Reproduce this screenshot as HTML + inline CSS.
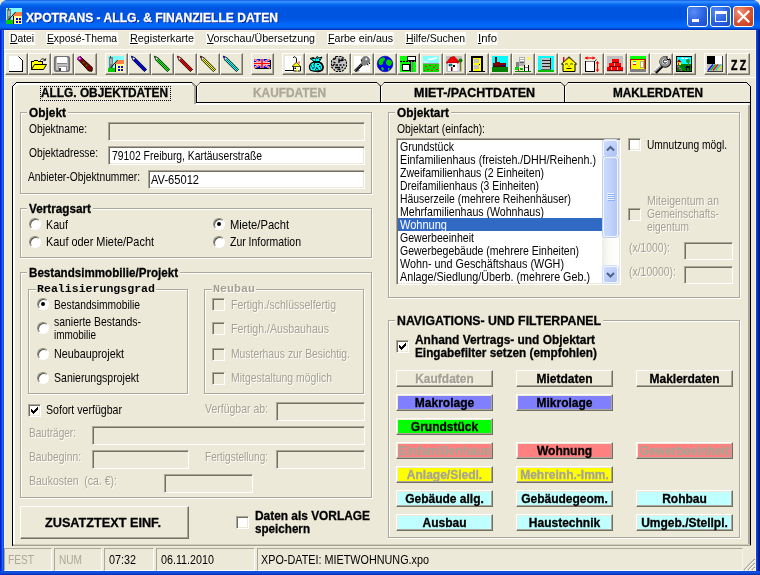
<!DOCTYPE html><html lang="de"><head><meta charset="utf-8"><title>XPOTRANS - ALLG. &amp; FINANZIELLE DATEN</title><style>
html,body{margin:0;padding:0;}
body{width:760px;height:575px;overflow:hidden;background:#ECE9D8;position:relative;font-family:"Liberation Sans",sans-serif;}
#w{position:absolute;left:0;top:0;width:760px;height:575px;overflow:hidden;will-change:transform;}
#w div,#w span,#w svg{position:absolute;box-sizing:border-box;}
.t{white-space:pre;transform-origin:0 0;color:#000;font-size:13px;line-height:15px;height:15px;}
.b{font-weight:bold;-webkit-text-stroke:.3px currentColor;}
.d{color:#A5A192;text-shadow:1px 1px 0 #fff;}
.m{font-size:11px;line-height:13px;height:13px;background:#FDFDFA;}
.mono{font-family:"Liberation Mono",monospace;font-weight:bold;font-size:10.5px;line-height:15px;}
.w{color:#fff;}
.gb{border:1px solid #ACA899;box-shadow:1px 1px 0 #fff, inset 1px 1px 0 #fff;}
.lbl{background:#ECE9D8;}
.in{border:1px solid;border-color:#ACA899 #fff #fff #ACA899;box-shadow:inset 1px 1px 0 #716F64, inset -1px -1px 0 #ECE9D8;background:#fff;}
.in.dis{background:#ECE9D8;}
.btn{border:1px solid;border-color:#fff #716F64 #716F64 #fff;box-shadow:inset -1px -1px 0 #ACA899, inset 1px 1px 0 #ECE9D8;background:#ECE9D8;}
.tb{border:1px solid;border-color:#fff #716F64 #716F64 #fff;box-shadow:inset -1px -1px 0 #ACA899;background:#ECE9D8;width:23px;height:22px;top:53px;}
.rad{width:12px;height:12px;border-radius:50%;background:#fff;border:1px solid;border-color:#8E8C7F #fff #fff #8E8C7F;box-shadow:inset 1px 1px 0 #5A584F;transform:rotate(0deg);}
.dot{width:4px;height:4px;border-radius:50%;background:#000;left:3px;top:3px;}
.sp{border:1px solid;border-color:#ACA899 #fff #fff #ACA899;}
</style></head><body><div id="w">
<div style="left:0;top:0;width:760px;height:575px;background:#0A50D8;border-radius:8px 8px 0 0;"></div>
<div class="" style="left:4px;top:30px;width:752px;height:541px;background:#ECE9D8;"></div>
<div style="left:0;top:0;width:760px;height:30px;border-radius:8px 8px 0 0;background:linear-gradient(to bottom,#0A50DC 0px,#2E86FF 1px,#3590FF 2px,#2480FC 3px,#0E6EF6 4px,#0560EA 6px,#0055E0 8px,#0055E0 18px,#005CEC 21px,#0266FA 24px,#026AFD 26px,#0262F2 27.500px,#0050D8 28.500px,#0032C0 29.500px,#0030BC 30px);"></div>
<div class="" style="left:4px;top:30px;width:752px;height:1px;background:#FAF2D6;"></div>
<div class="" style="left:4px;top:30px;width:1px;height:541px;background:#FAF2D6;"></div>
<div class="" style="left:755px;top:30px;width:1px;height:541px;background:#FAF2D6;"></div>
<div style="left:0;top:30px;width:4px;height:545px;background:linear-gradient(to right,#0019CF 0px,#0019CF 1px,#0A3BE0 1px,#0A3BE0 2px,#1A6AEE 2px,#1A6AEE 3px,#0A50E0 3px);"></div>
<div style="left:756px;top:30px;width:4px;height:545px;background:linear-gradient(to left,#00138C 0px,#00138C 1px,#001EA0 1px,#001EA0 2px,#0538D2 2px,#0538D2 3px,#0A48E6 3px);"></div>
<div style="left:0;top:571px;width:760px;height:4px;background:linear-gradient(to bottom,#0A4AD2 0px,#1058E2 1px,#0F48D6 2px,#0A2AB8 4px);"></div>
<span class="t b w" style="transform:scaleX(0.9305);left:26px;top:10px;text-shadow:1px 1px 0 #0A1F8C;font-size:13px;line-height:15px;height:15px;">XPOTRANS - ALLG. &amp; FINANZIELLE DATEN</span>
<svg style="left:6px;top:8px" width="16" height="16" viewBox="0 0 16 16" shape-rendering="crispEdges"><rect width="16" height="16" fill="#80FFFF"/><rect x="1" y="1" width="4" height="11" fill="#808080"/><rect x="2" y="0" width="1" height="2" fill="#404040"/><rect x="2" y="3" width="2" height="5" fill="#B0B0B0"/><rect x="0" y="12" width="7" height="4" fill="#00D000"/><path d="M6 8l4-4h6v4z" fill="#FF8040" shape-rendering="auto"/><path d="M2.5 12L9.6 4" stroke="#000" stroke-width=".9" shape-rendering="auto"/><rect x="7" y="8" width="9" height="8" fill="#FFFFA0"/><rect x="7" y="8" width="1" height="8" fill="#000"/><rect x="10" y="10" width="2" height="2" fill="#0000FF"/><rect x="13" y="10" width="2" height="2" fill="#0000FF"/><rect x="10" y="13" width="2" height="2" fill="#0000FF"/><rect x="13" y="13" width="2" height="2" fill="#0000FF"/></svg>
<div class="" style="left:687px;top:6px;width:21px;height:21px;border:1px solid #fff;border-radius:3px;background:radial-gradient(circle at 30% 25%,#5A8CF5 0%,#2A62E2 55%,#1C48C4 100%);"></div>
<div class="" style="left:710px;top:6px;width:21px;height:21px;border:1px solid #fff;border-radius:3px;background:radial-gradient(circle at 30% 25%,#5A8CF5 0%,#2A62E2 55%,#1C48C4 100%);"></div>
<div class="" style="left:733px;top:6px;width:21px;height:21px;border:1px solid #fff;border-radius:3px;background:radial-gradient(circle at 30% 25%,#F09478 0%,#DC5336 50%,#B8391C 100%);"></div>
<div class="" style="left:692px;top:19px;width:7px;height:3px;background:#fff;"></div>
<div class="" style="left:715px;top:11px;width:12px;height:11px;border:1px solid #fff;border-top-width:3px;"></div>
<svg style="left:737px;top:10px" width="13" height="13" viewBox="0 0 13 13"><path d="M1.5 1.5l10 10M11.5 1.5l-10 10" stroke="#fff" stroke-width="2.2" stroke-linecap="square"/></svg>
<span class="t m" style="transform:scaleX(0.9385);left:9px;top:32px;padding:0 1px;"><u>D</u>atei</span>
<span class="t m" style="transform:scaleX(0.9398);left:46px;top:32px;padding:0 1px;"><u>E</u>xposé-Thema</span>
<span class="t m" style="transform:scaleX(0.9787);left:129px;top:32px;padding:0 1px;"><u>R</u>egisterkarte</span>
<span class="t m" style="transform:scaleX(0.9709);left:206px;top:32px;padding:0 1px;"><u>V</u>orschau/Übersetzung</span>
<span class="t m" style="transform:scaleX(0.9671);left:327px;top:32px;padding:0 1px;"><u>F</u>arbe ein/aus</span>
<span class="t m" style="transform:scaleX(0.9473);left:405px;top:32px;padding:0 1px;"><u>H</u>ilfe/Suchen</span>
<span class="t m" style="transform:scaleX(1.0315);left:477px;top:32px;padding:0 1px;"><u>I</u>nfo</span>
<div class="" style="left:4px;top:49px;width:752px;height:1px;background:#fff;"></div>
<div class="" style="left:4px;top:77px;width:752px;height:1px;background:#fff;"></div>
<div class="tb" style="left:5px;"><svg width="23" height="22" viewBox="0 0 23 22" style="left:-1px;top:-1px" shape-rendering="crispEdges"><g transform="translate(3,3)"><path d="M1 0h10l4 4v12H1z" fill="#fff"/><path d="M10.5 .5l4 4" stroke="#000" fill="none" shape-rendering="auto"/><path d="M14.5 4V16M1 15.5h14" stroke="#000"/></g></svg></div>
<div class="tb" style="left:28px;"><svg width="23" height="22" viewBox="0 0 23 22" style="left:-1px;top:-1px" shape-rendering="crispEdges"><g transform="translate(3,3)"><g transform="translate(0,1)"><path d="M.5 12.5v-8h2l1-1h3l1 1h4v3" fill="#FFFF00" stroke="#000"/><path d="M.5 12.5l3-5h12l-3 5z" fill="#FFFF00" stroke="#000" shape-rendering="auto"/><path d="M9.5 3.5c1-2.2 3.4-2.2 4.6-.4M14.4 3.4l.4-2M14.4 3.4l-2-.2" stroke="#000" fill="none" shape-rendering="auto" stroke-width=".9"/></g></g></svg></div>
<div class="tb" style="left:51px;"><svg width="23" height="22" viewBox="0 0 23 22" style="left:-1px;top:-1px" shape-rendering="crispEdges"><g transform="translate(3,3)"><rect x=".8" y=".8" width="14.4" height="14.4" rx="1.5" fill="#C0C0C0" stroke="#707070" stroke-width="1.8" shape-rendering="auto"/><rect x="3" y="1" width="10" height="6" fill="#fff"/><rect x="3" y="7" width="10" height="1" fill="#808080"/><rect x="4" y="10" width="8" height="5" fill="#fff" stroke="#808080" stroke-width=".8"/><rect x="5" y="11.5" width="2" height="3" fill="#404040"/></g></svg></div>
<div class="tb" style="left:74px;"><svg width="23" height="22" viewBox="0 0 23 22" style="left:-1px;top:-1px" shape-rendering="crispEdges"><g transform="translate(3,3)"><g shape-rendering="auto"><path d="M.8 3.2L3.4 .6 15.4 11.6 15 15.2 11.6 15z" fill="#800000" stroke="#000" stroke-width=".9"/><circle cx="2.6" cy="2.6" r="2" fill="#FF00FF" stroke="#000" stroke-width=".5"/><circle cx="2.6" cy="2.4" r=".7" fill="#fff"/><circle cx="6.5" cy="6.6" r=".9" fill="#00A000"/><circle cx="9.5" cy="9.4" r=".9" fill="#00A000"/></g></g></svg></div>
<div class="tb" style="left:105px;"><svg width="23" height="22" viewBox="0 0 23 22" style="left:-1px;top:-1px" shape-rendering="crispEdges"><g transform="translate(3,3)"><rect width="16" height="16" fill="#80FFFF"/><rect x="1" y="1" width="4" height="11" fill="#808080"/><rect x="2" y="0" width="1" height="2" fill="#404040"/><rect x="2" y="3" width="2" height="5" fill="#B0B0B0"/><rect x="0" y="12" width="7" height="4" fill="#00D000"/><path d="M6 8l4-4h6v4z" fill="#FF8040" shape-rendering="auto"/><path d="M2.5 12L9.6 4" stroke="#000" stroke-width=".9" shape-rendering="auto"/><rect x="7" y="8" width="9" height="8" fill="#FFFFA0"/><rect x="7" y="8" width="1" height="8" fill="#000"/><rect x="10" y="10" width="2" height="2" fill="#0000FF"/><rect x="13" y="10" width="2" height="2" fill="#0000FF"/><rect x="10" y="13" width="2" height="2" fill="#0000FF"/><rect x="13" y="13" width="2" height="2" fill="#0000FF"/></g></svg></div>
<div class="tb" style="left:128px;"><svg width="23" height="22" viewBox="0 0 23 22" style="left:-1px;top:-1px" shape-rendering="crispEdges"><g transform="translate(3,3)"><g shape-rendering="auto"><path d="M0.4 0.2L4.2 2 15.6 13.4 13.4 15.6 2 4.2z" fill="#0000FF" stroke="#000" stroke-width=".9"/><path d="M0.4 0.2L4.4 2.2 2.2 4.4z" fill="#fff" stroke="#000" stroke-width=".5"/><path d="M0.2 0L2.4 1 1 2.4z" fill="#0000FF"/><path d="M3.6 3.6L14.4 14.4" stroke="#000080" stroke-width="1"/></g></g></svg></div>
<div class="tb" style="left:151px;"><svg width="23" height="22" viewBox="0 0 23 22" style="left:-1px;top:-1px" shape-rendering="crispEdges"><g transform="translate(3,3)"><g shape-rendering="auto"><path d="M0.4 0.2L4.2 2 15.6 13.4 13.4 15.6 2 4.2z" fill="#00FF00" stroke="#000" stroke-width=".9"/><path d="M0.4 0.2L4.4 2.2 2.2 4.4z" fill="#fff" stroke="#000" stroke-width=".5"/><path d="M0.2 0L2.4 1 1 2.4z" fill="#008000"/><path d="M3.6 3.6L14.4 14.4" stroke="#006000" stroke-width="1"/></g></g></svg></div>
<div class="tb" style="left:174px;"><svg width="23" height="22" viewBox="0 0 23 22" style="left:-1px;top:-1px" shape-rendering="crispEdges"><g transform="translate(3,3)"><g shape-rendering="auto"><path d="M0.4 0.2L4.2 2 15.6 13.4 13.4 15.6 2 4.2z" fill="#FF0000" stroke="#000" stroke-width=".9"/><path d="M0.4 0.2L4.4 2.2 2.2 4.4z" fill="#fff" stroke="#000" stroke-width=".5"/><path d="M0.2 0L2.4 1 1 2.4z" fill="#FF0000"/><path d="M3.6 3.6L14.4 14.4" stroke="#600000" stroke-width="1"/></g></g></svg></div>
<div class="tb" style="left:197px;"><svg width="23" height="22" viewBox="0 0 23 22" style="left:-1px;top:-1px" shape-rendering="crispEdges"><g transform="translate(3,3)"><g shape-rendering="auto"><path d="M0.4 0.2L4.2 2 15.6 13.4 13.4 15.6 2 4.2z" fill="#FFFF00" stroke="#000" stroke-width=".9"/><path d="M0.4 0.2L4.4 2.2 2.2 4.4z" fill="#fff" stroke="#000" stroke-width=".5"/><path d="M0.2 0L2.4 1 1 2.4z" fill="#800000"/><path d="M3.6 3.6L14.4 14.4" stroke="#404000" stroke-width="1"/></g></g></svg></div>
<div class="tb" style="left:220px;"><svg width="23" height="22" viewBox="0 0 23 22" style="left:-1px;top:-1px" shape-rendering="crispEdges"><g transform="translate(3,3)"><g shape-rendering="auto"><path d="M0.4 0.2L4.2 2 15.6 13.4 13.4 15.6 2 4.2z" fill="#00FFFF" stroke="#000" stroke-width=".9"/><path d="M0.4 0.2L4.4 2.2 2.2 4.4z" fill="#fff" stroke="#000" stroke-width=".5"/><path d="M0.2 0L2.4 1 1 2.4z" fill="#0000FF"/><path d="M3.6 3.6L14.4 14.4" stroke="#006060" stroke-width="1"/></g></g></svg></div>
<div class="tb" style="left:251px;"><svg width="23" height="22" viewBox="0 0 23 22" style="left:-1px;top:-1px" shape-rendering="crispEdges"><g transform="translate(3,3)"><rect x="1" y="4" width="16" height="9" fill="#000"/><rect x="0" y="3" width="16" height="9" fill="#0000E0"/><g shape-rendering="auto"><path d="M0 3l16 9M16 3L0 12" stroke="#fff" stroke-width="2"/><path d="M0 3l16 9M16 3L0 12" stroke="#FF0000" stroke-width=".8"/><path d="M8 3v9M0 7.5h16" stroke="#fff" stroke-width="3"/><path d="M8 3v9M0 7.5h16" stroke="#FF0000" stroke-width="1.6"/></g></g></svg></div>
<div class="tb" style="left:282px;"><svg width="23" height="22" viewBox="0 0 23 22" style="left:-1px;top:-1px" shape-rendering="crispEdges"><g transform="translate(3,3)"><rect width="16" height="16" fill="#fff"/><g shape-rendering="auto" fill="none" stroke="#000"><path d="M8.300 2C8.800 .300 10 .300 11 1.800L11.500 2.800V7" stroke-width="1"/><path d="M0 14.500h8.500" stroke-width="1"/><path d="M8.500 10.500v4.500h7v-4.500" fill="#fff" stroke-width="1"/><path d="M7 10.500L11.300 6.300l4.500 4.200z" fill="#FFFF00" stroke-width=".700"/><rect x="11.500" y="12.500" width="1.500" height="3" fill="#FFFF00" stroke="none"/><rect x="9.500" y="11.500" width="1.500" height="1.500" fill="#000" stroke="none"/><rect x="13.500" y="5.500" width="1.200" height="2" fill="#FF0000" stroke="none"/></g></g></svg></div>
<div class="tb" style="left:305px;"><svg width="23" height="22" viewBox="0 0 23 22" style="left:-1px;top:-1px" shape-rendering="crispEdges"><g transform="translate(3,3)"><g shape-rendering="auto"><path d="M5.500 6C2 7.500 .800 10.500 2 13.500 3.500 15.800 13 15.800 14.500 13.500 15.800 10.500 14.500 7.500 11 6z" fill="#00FFFF" stroke="#000" stroke-width="1.300"/><path d="M12 6.500c3 1.500 3.500 5 2.300 7.200-.800 1.300-3 1.800-5 2" stroke="#000" stroke-width="1.600" fill="none"/><path d="M2 2.500l3.500-1 2 1.500L9 .500l2 1.500 3-1-2 3.500-1 1.500H6L4.500 4z" fill="#00FFFF" stroke="#000" stroke-width="1"/><path d="M5.500 5.800h6" stroke="#000" stroke-width="1.400"/><path d="M5 9h2M9 8.500h2M4 12h2M8 11.500l2 1.500M11 10.500h1.500M7 13.500h1M3 10h1M6 7.500h1M6 11h1M10 14h1M4 2.500h2M9 2.500h1M11 3.500h1M7 4h1M12 12h1" stroke="#000" stroke-width="1.200"/></g></g></svg></div>
<div class="tb" style="left:328px;"><svg width="23" height="22" viewBox="0 0 23 22" style="left:-1px;top:-1px" shape-rendering="crispEdges"><g transform="translate(3,3)"><g shape-rendering="auto"><path d="M5 .500h6l4.500 4.500v6L11 15.500H5L.500 11V5z" fill="#C4C4C4" stroke="#000" stroke-width="1.100" stroke-dasharray="2.200 1"/><path d="M3 3.500l2-1.500M8 2.500V7M8 4.500h3.500M10.500 2.500l2 2M2.500 6l2 1M4.500 9h2.500M8.500 9h2M12 9h1.500M4 11.500h5M10.500 11.500h1.500M6.500 13.500h3M1.500 10l2-2" stroke="#000" stroke-width="1.300" fill="none"/></g></g></svg></div>
<div class="tb" style="left:351px;"><svg width="23" height="22" viewBox="0 0 23 22" style="left:-1px;top:-1px" shape-rendering="crispEdges"><g transform="translate(3,3)"><rect width="16" height="16" fill="#fff"/><g shape-rendering="auto"><path d="M1 15.200L8 8.200" stroke="#000" stroke-width="2.800"/><path d="M1 14.600L8 7.600" stroke="#909090" stroke-width="1.200" stroke-dasharray="1 .800"/><path d="M3.800 15.500l1.200-1.200" stroke="#000" stroke-width="1"/><path d="M7.500 5c0-3 2-5 5-4.500 2.500 .500 3.500 3 3 5-.500 1.500-1.500 2-2.500 2-.500 1.500-2 2-3.500 1.500C8 8.500 7.500 7 7.500 5z" fill="#808080" stroke="#505050" stroke-width=".600"/><circle cx="12.300" cy="3.300" r="1" fill="#fff"/><path d="M7.300 3.500l.200 1.500M15.300 6.500l.300 1.500M13 8.500l1.500 .500" stroke="#000" stroke-width="1"/></g></g></svg></div>
<div class="tb" style="left:374px;"><svg width="23" height="22" viewBox="0 0 23 22" style="left:-1px;top:-1px" shape-rendering="crispEdges"><g transform="translate(3,3)"><g shape-rendering="auto"><circle cx="8" cy="8" r="7.8" fill="#0000F0" stroke="#000080" stroke-width=".6"/><path d="M3 3c2-2 5-2 5 0 0 2-2 2-2 4 0 2-3 3-4 1-1-2 0-4 1-5zM10 4c2-1 4 0 5 2 0 2-1 4-3 4-1-1-3-1-3-3 0-1 0-2 1-3zM5 11c1 0 2 1 2 2s-1 2-2 1-1-3 0-3zM11 12c1 0 2 0 2 1l-2 2z" fill="#00D000"/></g></g></svg></div>
<div class="tb" style="left:397px;"><svg width="23" height="22" viewBox="0 0 23 22" style="left:-1px;top:-1px" shape-rendering="crispEdges"><g transform="translate(3,3)"><rect width="16" height="16" fill="#00FF00"/><rect x="7.5" y=".5" width="8" height="4" fill="#fff" stroke="#000"/><rect x="0" y="5" width="16" height="1" fill="#808080"/><path d="M0 5.5h16" stroke="#000" stroke-dasharray="2 1"/><rect x="2.5" y="8.5" width="7" height="6" fill="#fff" stroke="#000"/><rect x="10" y="6" width="1" height="10" fill="#000"/><rect x="12" y="6" width="1" height="10" fill="#808080"/></g></svg></div>
<div class="tb" style="left:420px;"><svg width="23" height="22" viewBox="0 0 23 22" style="left:-1px;top:-1px" shape-rendering="crispEdges"><g transform="translate(3,3)"><rect width="16" height="8" fill="#80FFFF"/><rect y="8" width="16" height="8" fill="#00E000"/><rect y="7" width="16" height="1" fill="#A0A0A0"/><g shape-rendering="auto"><path d="M5 3.5c2-1 3 .5 5-.5s3-1.500 4-1" stroke="#fff" stroke-width="1.6" fill="none"/><path d="M1 6h4" stroke="#fff" stroke-width="1"/></g><g fill="#FF0000"><rect x="2" y="10" width="2" height="1"/><rect x="6" y="9" width="2" height="1"/><rect x="10" y="11" width="2" height="1"/><rect x="4" y="13" width="2" height="1"/><rect x="13" y="13" width="2" height="1"/><rect x="8" y="14" width="2" height="1"/><rect x="12" y="9" width="1" height="1"/><rect x="1" y="14" width="1" height="1"/></g></g></svg></div>
<div class="tb" style="left:443px;"><svg width="23" height="22" viewBox="0 0 23 22" style="left:-1px;top:-1px" shape-rendering="crispEdges"><g transform="translate(3,3)"><rect width="16" height="16" fill="#C0C0C0"/><g shape-rendering="auto"><path d="M0 7L5 1l7 6z" fill="#FF0000" stroke="#800000" stroke-width=".7"/><path d="M5 1l3-1 6 6-2 1z" fill="#E00000"/><rect x="2" y="7" width="9" height="8" fill="#fff"/><rect x="3" y="8" width="3" height="2" fill="#00C0C0" stroke="#000" stroke-width=".5"/><rect x="7" y="9" width="2" height="2" fill="#000"/><rect x="5" y="11" width="1.500" height="4" fill="#800000"/><rect x="11" y="8" width="2" height="7" fill="#E0E0E0"/><rect x="14" y="5" width="1" height="10" fill="#808000"/><circle cx="14.500" cy="4.500" r="2" fill="#008000"/></g></g></svg></div>
<div class="tb" style="left:466px;"><svg width="23" height="22" viewBox="0 0 23 22" style="left:-1px;top:-1px" shape-rendering="crispEdges"><g transform="translate(3,3)"><rect x="2" y="0" width="12" height="16" fill="#000"/><rect x="4" y="2" width="8" height="13" fill="#FFFF00"/><rect x="5" y="3" width="5" height="4" fill="#C0C0C0"/><rect x="5" y="9" width="5" height="4" fill="#C0C0C0"/><rect x="0" y="15" width="16" height="1" fill="#000"/><rect x="10" y="8" width="1" height="1" fill="#000"/></g></svg></div>
<div class="tb" style="left:489px;"><svg width="23" height="22" viewBox="0 0 23 22" style="left:-1px;top:-1px" shape-rendering="crispEdges"><g transform="translate(3,3)"><rect width="16" height="11" fill="#00FFFF"/><rect y="11" width="16" height="5" fill="#008000"/><rect x="1" y="7" width="13" height="4" fill="#800000"/><rect x="3" y="1" width="1.500" height="7" fill="#800000"/><rect x="9" y="9" width="4" height="2" fill="#0000C0"/><rect x="1" y="10" width="13" height="1" fill="#400000"/><rect x="5" y="6" width="3" height="1" fill="#800000"/></g></svg></div>
<div class="tb" style="left:512px;"><svg width="23" height="22" viewBox="0 0 23 22" style="left:-1px;top:-1px" shape-rendering="crispEdges"><g transform="translate(3,3)"><g><rect x="4" y="1" width="6" height="9" fill="#B0B0B0"/><rect x="5" y="2" width="4" height="1" fill="#fff"/><rect x="5" y="4" width="4" height="1" fill="#fff"/><rect x="5" y="6" width="4" height="1" fill="#606060"/><rect x="1" y="6" width="3" height="7" fill="#808080"/><rect x="9" y="9" width="5" height="6" fill="#fff"/><rect x="9" y="9" width="1" height="6" fill="#000"/><rect x="13" y="9" width="1" height="6" fill="#000"/><rect x="10" y="11" width="3" height="1" fill="#808080"/><rect x="0" y="11" width="4" height="3" fill="#00E000"/><rect x="5" y="12" width="3" height="2" fill="#00C000"/><rect x="0" y="15" width="16" height="1" fill="#008000"/><rect x="3" y="13" width="1" height="2" fill="#FF0000"/><rect x="12" y="2" width="3" height="1" fill="#FFFF00"/><rect x="13" y="1" width="1" height="3" fill="#FFFF00"/></g></g></svg></div>
<div class="tb" style="left:535px;"><svg width="23" height="22" viewBox="0 0 23 22" style="left:-1px;top:-1px" shape-rendering="crispEdges"><g transform="translate(3,3)"><rect width="16" height="16" fill="#00FFFF"/><rect y="14" width="16" height="2" fill="#00C000"/><rect x="3" y="2" width="10" height="12" fill="#C0C0C0"/><rect x="12" y="2" width="1" height="12" fill="#000"/><rect x="4" y="4" width="8" height="1.200" fill="#202020"/><rect x="4" y="7" width="8" height="1.200" fill="#202020"/><rect x="4" y="10" width="8" height="1.200" fill="#202020"/><rect x="3" y="13" width="10" height="1" fill="#606060"/></g></svg></div>
<div class="tb" style="left:558px;"><svg width="23" height="22" viewBox="0 0 23 22" style="left:-1px;top:-1px" shape-rendering="crispEdges"><g transform="translate(3,3)"><g shape-rendering="auto"><rect x="2" y="1" width="1.500" height="5" fill="#FF0000"/><path d="M.5 8L8 .8 15.500 8h-1.500v7.500H2V8z" fill="#FFFF00" stroke="#000" stroke-width="1"/><path d="M4 8.500c1-1 2-1 3 0M9 8.500c1-1 2-1 3 0" stroke="#000" stroke-width=".8" fill="none"/><path d="M5.500 12.500h5" stroke="#000" stroke-width=".9"/><path d="M8 9.500v1.500" stroke="#806000" stroke-width=".8"/><path d="M4 5l4-3 4 3" stroke="#806000" stroke-width=".7" fill="none"/></g></g></svg></div>
<div class="tb" style="left:581px;"><svg width="23" height="22" viewBox="0 0 23 22" style="left:-1px;top:-1px" shape-rendering="crispEdges"><g transform="translate(3,3)"><rect x="1.500" y="5.500" width="9" height="10" fill="#fff" stroke="#000"/><rect x="2" y="5" width="8" height="1" fill="#808080"/><g shape-rendering="auto"><path d="M1 2h10" stroke="#FF0000" stroke-width="1.200"/><path d="M1 2l2.500-1.800v3.600zM11 2L8.500 .2v3.600z" fill="#FF0000"/><path d="M13.500 5.500v10" stroke="#FF0000" stroke-width="1.200"/><path d="M13.500 5l-1.800 2.500h3.600zM13.500 16l-1.800-2.500h3.600z" fill="#FF0000"/><path d="M10.500 5.500l2-2" stroke="#000" stroke-width=".8"/></g></g></svg></div>
<div class="tb" style="left:604px;"><svg width="23" height="22" viewBox="0 0 23 22" style="left:-1px;top:-1px" shape-rendering="crispEdges"><g transform="translate(3,3)"><rect width="16" height="16" fill="#C0C0C0"/><g fill="#FF0000"><rect x="5" y="3" width="7" height="3"/><rect x="2" y="7" width="5" height="3"/><rect x="8" y="7" width="6" height="3"/><rect x="0" y="11" width="4" height="3"/><rect x="5" y="11" width="5" height="3"/><rect x="11" y="11" width="5" height="3"/></g><g fill="#800000"><rect x="5" y="6" width="7" height="1"/><rect x="2" y="10" width="12" height="1"/><rect x="0" y="14" width="16" height="1"/></g></g></svg></div>
<div class="tb" style="left:627px;"><svg width="23" height="22" viewBox="0 0 23 22" style="left:-1px;top:-1px" shape-rendering="crispEdges"><g transform="translate(3,3)"><rect width="16" height="3" fill="#00FF00"/><rect y="3" width="16" height="10" fill="#FFFF00"/><rect y="13" width="16" height="3" fill="#808080"/><path d="M.500 13V3.500h15V13" fill="none" stroke="#C00000"/><rect x="3" y="5" width="3" height="3" fill="#fff"/><rect x="3" y="5" width="3" height="1" fill="#00C0C0"/><rect x="3" y="8" width="3" height="1" fill="#FF0000"/><rect x="10" y="5" width="3" height="6" fill="#fff"/><rect x="10" y="5" width="3" height="6" fill="none" stroke="#808080" stroke-width=".6"/><rect x="14" y="4" width="1" height="9" fill="#808000"/></g></svg></div>
<div class="tb" style="left:650px;"><svg width="23" height="22" viewBox="0 0 23 22" style="left:-1px;top:-1px" shape-rendering="crispEdges"><g transform="translate(3,3)"><g shape-rendering="auto"><path d="M2.500 16.500L9.500 9.500" stroke="#000" stroke-width="3.400"/><path d="M1.500 15.200L8.500 8.200" stroke="#B0B0B0" stroke-width="3"/><path d="M1 14.300L7.800 7.500" stroke="#fff" stroke-width="1.200"/><path d="M2.500 16L4 14.500M4.200 14.300l1.500-1.500M6 12.500L7.500 11" stroke="#404040" stroke-width=".600"/><circle cx="12.300" cy="5.800" r="4" fill="none" stroke="#000" stroke-width="3.800"/><circle cx="12" cy="5.500" r="4" fill="#fff" stroke="#909090" stroke-width="2.600"/><path d="M12 5.500L17 0" stroke="#ECE9D8" stroke-width="2.600"/><path d="M13.800 .800l.400 2.600 2.600 .400" stroke="#000" stroke-width="1.100" fill="none"/><circle cx="12" cy="5.500" r="1.700" fill="#fff" stroke="#000" stroke-width="1"/><path d="M12.400 5.500h1.600" stroke="#fff" stroke-width="1.600"/></g></g></svg></div>
<div class="tb" style="left:673px;"><svg width="23" height="22" viewBox="0 0 23 22" style="left:-1px;top:-1px" shape-rendering="crispEdges"><g transform="translate(3,3)"><rect width="16" height="16" fill="#000"/><rect x="1" y="1" width="14" height="7" fill="#00FFFF"/><rect x="1" y="8" width="14" height="7" fill="#008000"/><rect x="5" y="2" width="3" height="1" fill="#fff"/><rect x="6" y="1" width="1" height="1" fill="#fff"/><rect x="9" y="2" width="3" height="1" fill="#fff"/><rect x="1" y="6" width="4" height="3" fill="#FFFF00"/><path d="M.800 6.200L3 3.200l2.800 3z" fill="#900000" shape-rendering="auto"/><rect x="2" y="7" width="1" height="2" fill="#C00000"/><circle cx="12" cy="5" r="2" fill="#209020" shape-rendering="auto"/><rect x="11.500" y="6.500" width="1" height="2.500" fill="#906020"/><rect x="10" y="10.500" width="1" height="3" fill="#000"/><rect x="13" y="10.500" width="1" height="3" fill="#000"/><rect x="10" y="10" width="4" height="2" fill="#000"/><rect x="9" y="10.500" width="1" height="1" fill="#0000FF"/><path d="M1.500 10l4 4.500" stroke="#FF40FF" stroke-width="1.300" stroke-dasharray="1.500 1" shape-rendering="auto"/><path d="M2.500 10l3.500 4" stroke="#fff" stroke-width=".600" stroke-dasharray="1 1.500" shape-rendering="auto"/></g></svg></div>
<div class="tb" style="left:704px;"><svg width="23" height="22" viewBox="0 0 23 22" style="left:-1px;top:-1px" shape-rendering="crispEdges"><g transform="translate(3,3)"><rect x="0" y="0" width="8" height="8" fill="#000"/><rect x="8" y="0" width="7" height="8" fill="#fff"/><rect x="0" y="8" width="15" height="7" fill="#C0C0C0"/><g shape-rendering="auto" stroke-width="1.300"><path d="M1 14.500l5-6" stroke="#0000FF"/><path d="M3.500 14.500l5-6" stroke="#00C000"/><path d="M6 14.500l5-6" stroke="#FF0000"/><path d="M8.500 14.500l5-6" stroke="#00E0E0"/><path d="M11 14.500l4-4.800" stroke="#E0E000"/></g><rect x="15" y="0" width="1" height="16" fill="#404040"/><rect x="0" y="15" width="16" height="1" fill="#404040"/></g></svg></div>
<div class="tb" style="left:727px;"><span class="t b" style="left:3px;top:3px;font-size:15px;line-height:15px;height:15px;letter-spacing:3.5px;transform:scaleX(.7);-webkit-text-stroke:.5px #000;">ZZ</span></div>
<svg style="left:0;top:0" width="760" height="575" viewBox="0 0 760 575" shape-rendering="crispEdges" fill="none">
<path d="M14 546V87l3-3H192" stroke="#fff" stroke-width="2"/>
<path d="M12.500 546V86.500l4-4H192" stroke="#000"/>
<path d="M13 86l3.500-3.500" stroke="#000" shape-rendering="auto"/>
<path d="M12 82h4l-4 4z" fill="#DCDCDC" shape-rendering="auto"/>
<path d="M192 82.500l3.500 3.500M200 82.500l-3.500 3.500" stroke="#000" shape-rendering="auto"/>
<path d="M195 86v18" stroke="#ACA899" stroke-width="2"/>
<path d="M192.500 84l2 2" stroke="#ACA899" stroke-width="1.500" shape-rendering="auto"/>
<path d="M196 104H749" stroke="#fff" stroke-width="2"/>
<path d="M197.500 86v16M200 83.500H377M381.500 86v16M384 83.500H561M565.500 86v16M568 83.500H746" stroke="#fff"/>
<path d="M196.500 86v16M200 82.500H377M196 102.500H751" stroke="#000"/>
<path d="M377 82.500l3.500 3.500M384 82.500l-3.500 3.500" stroke="#000" shape-rendering="auto"/>
<path d="M380.500 86v16M384 82.500H561" stroke="#000"/>
<path d="M561 82.500l3.500 3.500M568 82.500l-3.500 3.500" stroke="#000" shape-rendering="auto"/>
<path d="M564.500 86v16M568 82.500H746.500l4 4V546" stroke="#000"/>
<path d="M747 83l3.500 3.500" stroke="#000" shape-rendering="auto"/>
<path d="M751 82h-4l4 4z" fill="#DCDCDC" shape-rendering="auto"/>
<path d="M749 105V545" stroke="#ACA899" stroke-width="2"/>
<path d="M13 544.500H750" stroke="#CFCCBC"/>
<path d="M13 545.500H751" stroke="#A5A292"/>
<path d="M193.500 83h6l-3 3zM378.500 83h5l-2.500 2.500zM562.500 83h5l-2.500 2.500z" fill="#E4E4E4" shape-rendering="auto"/>
</svg>
<span class="t b" style="transform:scaleX(0.9887);left:41px;top:86px;font-size:12px;">ALLG. OBJEKTDATEN</span>
<div class="" style="left:40px;top:86px;width:131px;height:15px;border:1px dotted #000;"></div>
<span class="t b" style="transform:scaleX(0.9894);left:253px;top:86px;font-size:12px;color:#ACA899;">KAUFDATEN</span>
<span class="t b" style="transform:scaleX(1.0411);left:414px;top:86px;font-size:12px;">MIET-/PACHTDATEN</span>
<span class="t b" style="transform:scaleX(0.9806);left:613px;top:86px;font-size:12px;">MAKLERDATEN</span>
<div class="gb" style="left:20px;top:112px;width:352px;height:82px;"></div>
<div class="lbl" style="left:27px;top:107px;width:41px;height:13px"></div>
<span class="t b" style="transform:scaleX(0.9143);left:29px;top:105px;">Objekt</span>
<span class="t " style="transform:scaleX(0.7869);left:29px;top:121px;">Objektname:</span>
<div class="in dis" style="left:108px;top:122px;width:257px;height:19px;"></div>
<span class="t " style="transform:scaleX(0.7891);left:29px;top:145px;">Objektadresse:</span>
<div class="in" style="left:108px;top:146px;width:257px;height:19px;"></div>
<span class="t " style="transform:scaleX(0.7953);left:112px;top:148px;">79102 Freiburg, Kartäuserstraße</span>
<span class="t " style="transform:scaleX(0.7908);left:28px;top:169px;">Anbieter-Objektnummer:</span>
<div class="in" style="left:148px;top:170px;width:217px;height:19px;"></div>
<span class="t " style="transform:scaleX(0.8550);left:151px;top:172px;">AV-65012</span>
<div class="gb" style="left:20px;top:208px;width:352px;height:50px;"></div>
<div class="lbl" style="left:27px;top:203px;width:66px;height:13px"></div>
<span class="t b" style="transform:scaleX(0.9030);left:29px;top:201px;">Vertragsart</span>
<div class="rad" style="left:29px;top:218px;width:12px;height:12px;"></div>
<span class="t " style="transform:scaleX(0.8224);left:46px;top:217px;">Kauf</span>
<div class="rad" style="left:29px;top:236px;width:12px;height:12px;"></div>
<span class="t " style="transform:scaleX(0.8395);left:46px;top:234px;">Kauf oder Miete/Pacht</span>
<div class="rad" style="left:213px;top:218px;width:12px;height:12px;"><div class="dot"></div></div>
<span class="t " style="transform:scaleX(0.8594);left:230px;top:217px;">Miete/Pacht</span>
<div class="rad" style="left:213px;top:236px;width:12px;height:12px;"></div>
<span class="t " style="transform:scaleX(0.8054);left:230px;top:234px;">Zur Information</span>
<div class="gb" style="left:20px;top:272px;width:352px;height:226px;"></div>
<div class="lbl" style="left:27px;top:267px;width:153px;height:13px"></div>
<span class="t b" style="transform:scaleX(0.8928);left:29px;top:265px;">Bestandsimmobilie/Projekt</span>
<div class="gb" style="left:28px;top:289px;width:160px;height:105px;"></div>
<div class="lbl" style="left:36px;top:284px;width:120px;height:13px"></div>
<span class="t mono" style="transform:scaleX(1.1015);left:37px;top:282px;">Realisierungsgrad</span>
<div class="rad" style="left:37px;top:298px;width:12px;height:12px;"><div class="dot"></div></div>
<span class="t " style="transform:scaleX(0.7882);left:54px;top:297px;">Bestandsimmobilie</span>
<div class="rad" style="left:37px;top:322px;width:12px;height:12px;"></div>
<span class="t " style="transform:scaleX(0.8025);left:54px;top:314px;">sanierte Bestands-</span>
<span class="t " style="transform:scaleX(0.7649);left:54px;top:327px;">immobilie</span>
<div class="rad" style="left:37px;top:348px;width:12px;height:12px;"></div>
<span class="t " style="transform:scaleX(0.8278);left:54px;top:346px;">Neubauprojekt</span>
<div class="rad" style="left:37px;top:372px;width:12px;height:12px;"></div>
<span class="t " style="transform:scaleX(0.8111);left:54px;top:370px;">Sanierungsprojekt</span>
<div class="gb" style="left:204px;top:289px;width:160px;height:105px;"></div>
<div class="lbl" style="left:212px;top:284px;width:44px;height:13px"></div>
<span class="t mono d" style="transform:scaleX(1.1107);left:213px;top:282px;">Neubau</span>
<div class="in dis" style="left:212px;top:298px;width:13px;height:13px;"></div>
<span class="t d" style="transform:scaleX(0.8073);left:231px;top:297px;">Fertigh./schlüsselfertig</span>
<div class="in dis" style="left:212px;top:322px;width:13px;height:13px;"></div>
<span class="t d" style="transform:scaleX(0.8169);left:231px;top:321px;">Fertigh./Ausbauhaus</span>
<div class="in dis" style="left:212px;top:348px;width:13px;height:13px;"></div>
<span class="t d" style="transform:scaleX(0.7956);left:231px;top:346px;">Musterhaus zur Besichtig.</span>
<div class="in dis" style="left:212px;top:372px;width:13px;height:13px;"></div>
<span class="t d" style="transform:scaleX(0.8033);left:231px;top:370px;">Mitgestaltung möglich</span>
<div class="in" style="left:28px;top:404px;width:13px;height:13px;"><svg width="7" height="7" style="left:2px;top:2px" viewBox="0 0 7 7" shape-rendering="crispEdges"><path d="M0 2h1v1h1v1h1v-1h1v-1h1v-1h1v-1h1v3h-1v1h-1v1h-1v1h-1v1h-1v-1h-1v-1h-1z" fill="#000"/></svg></div>
<span class="t " style="transform:scaleX(0.8153);left:46px;top:402px;">Sofort verfügbar</span>
<span class="t d" style="transform:scaleX(0.8070);left:205px;top:401px;">Verfügbar ab:</span>
<div class="in dis" style="left:276px;top:402px;width:89px;height:19px;"></div>
<span class="t d" style="transform:scaleX(0.7743);left:29px;top:425px;">Bauträger:</span>
<div class="in dis" style="left:92px;top:426px;width:273px;height:19px;"></div>
<span class="t d" style="transform:scaleX(0.7905);left:29px;top:449px;">Baubeginn:</span>
<div class="in dis" style="left:92px;top:450px;width:97px;height:19px;"></div>
<span class="t d" style="transform:scaleX(0.7715);left:205px;top:449px;">Fertigstellung:</span>
<div class="in dis" style="left:276px;top:450px;width:89px;height:19px;"></div>
<span class="t d" style="transform:scaleX(0.8064);left:29px;top:473px;">Baukosten  (ca. €):</span>
<div class="in dis" style="left:164px;top:474px;width:89px;height:19px;"></div>
<div class="btn" style="left:20px;top:506px;width:169px;height:33px;"></div>
<span class="t b" style="transform:scaleX(0.9753);left:45px;top:515px;">ZUSATZTEXT EINF.</span>
<div class="in" style="left:236px;top:516px;width:13px;height:13px;"></div>
<span class="t b" style="transform:scaleX(0.9149);left:255px;top:508px;">Daten als VORLAGE</span>
<span class="t b" style="transform:scaleX(0.8954);left:255px;top:521px;">speichern</span>
<div class="gb" style="left:388px;top:112px;width:352px;height:186px;"></div>
<div class="lbl" style="left:395px;top:107px;width:56px;height:13px"></div>
<span class="t b" style="transform:scaleX(0.9110);left:397px;top:105px;">Objektart</span>
<span class="t " style="transform:scaleX(0.7960);left:397px;top:121px;">Objektart (einfach):</span>
<div class="in" style="left:396px;top:138px;width:225px;height:147px;"></div>
<span class="t " style="transform:scaleX(0.8122);left:400px;top:139px;">Grundstück</span>
<span class="t " style="transform:scaleX(0.8245);left:400px;top:152px;">Einfamilienhaus (freisteh./DHH/Reihenh.)</span>
<span class="t " style="transform:scaleX(0.8101);left:400px;top:165px;">Zweifamilienhaus (2 Einheiten)</span>
<span class="t " style="transform:scaleX(0.7981);left:400px;top:178px;">Dreifamilienhaus (3 Einheiten)</span>
<span class="t " style="transform:scaleX(0.7995);left:400px;top:191px;">Häuserzeile (mehrere Reihenhäuser)</span>
<span class="t " style="transform:scaleX(0.8145);left:400px;top:204px;">Mehrfamilienhaus (Wohnhaus)</span>
<div class="" style="left:398px;top:218px;width:204px;height:13px;background:#316AC5;"></div>
<span class="t w" style="transform:scaleX(0.8480);left:400px;top:217px;">Wohnung</span>
<span class="t " style="transform:scaleX(0.8126);left:400px;top:230px;">Gewerbeeinheit</span>
<span class="t " style="transform:scaleX(0.8068);left:400px;top:243px;">Gewerbegebäude (mehrere Einheiten)</span>
<span class="t " style="transform:scaleX(0.8294);left:400px;top:256px;">Wohn- und Geschäftshaus (WGH)</span>
<span class="t " style="transform:scaleX(0.8268);left:400px;top:269px;">Anlage/Siedlung/Überb. (mehrere Geb.)</span>
<div style="left:602px;top:140px;width:17px;height:143px;background:linear-gradient(to right,#EEEDE5,#FBFBF8 40%,#FEFEFB);"></div><div style="left:603px;top:140px;width:15px;height:17px;border-radius:3px;border:1px solid #F2F6FE;background:linear-gradient(135deg,#CFDDFD,#BBCEF8 60%,#AEC2F0);box-shadow:0 0 0 1px #D2DEF8;"></div><svg style="left:603px;top:141px" width="15" height="15" viewBox="0 0 15 15"><path d="M4 9.500L7.500 6 11 9.500" fill="none" stroke="#4D6185" stroke-width="2"/></svg><div style="left:603px;top:157px;width:15px;height:80px;border-radius:3px;border:1px solid #F2F6FE;background:linear-gradient(to right,#CADAFD,#C1D3FB 50%,#B3C7F4);box-shadow:0 0 0 1px #BDCEF4;"></div><svg style="left:607px;top:193px" width="8" height="9" viewBox="0 0 8 9" shape-rendering="crispEdges"><path d="M0 .500h7M0 2.500h7M0 4.500h7M0 6.500h7" stroke="#EEF4FE"/><path d="M1 1.500h7M1 3.500h7M1 5.500h7M1 7.500h7" stroke="#8CB0F8"/></svg><div style="left:603px;top:266px;width:15px;height:17px;border-radius:3px;border:1px solid #F2F6FE;background:linear-gradient(135deg,#CFDDFD,#BBCEF8 60%,#AEC2F0);box-shadow:0 0 0 1px #D2DEF8;"></div><svg style="left:603px;top:267px" width="15" height="15" viewBox="0 0 15 15"><path d="M4 6L7.500 9.500 11 6" fill="none" stroke="#4D6185" stroke-width="2"/></svg>
<div class="in" style="left:628px;top:138px;width:13px;height:13px;"></div>
<span class="t " style="transform:scaleX(0.7852);left:647px;top:137px;">Umnutzung mögl.</span>
<div class="in dis" style="left:628px;top:208px;width:13px;height:13px;"></div>
<span class="t d" style="transform:scaleX(0.8100);left:647px;top:193px;">Miteigentum an</span>
<span class="t d" style="transform:scaleX(0.7908);left:647px;top:206px;">Gemeinschafts-</span>
<span class="t d" style="transform:scaleX(0.7853);left:647px;top:219px;">eigentum</span>
<span class="t d" style="transform:scaleX(0.7990);left:629px;top:240px;">(x/1000):</span>
<div class="in dis" style="left:684px;top:242px;width:49px;height:18px;"></div>
<span class="t d" style="transform:scaleX(0.8028);left:629px;top:264px;">(x/10000):</span>
<div class="in dis" style="left:684px;top:266px;width:49px;height:18px;"></div>
<div class="gb" style="left:388px;top:320px;width:352px;height:218px;"></div>
<div class="lbl" style="left:395px;top:315px;width:208px;height:13px"></div>
<span class="t b" style="transform:scaleX(0.9457);left:397px;top:313px;">NAVIGATIONS- UND FILTERPANEL</span>
<div class="in" style="left:396px;top:340px;width:13px;height:13px;"><svg width="7" height="7" style="left:2px;top:2px" viewBox="0 0 7 7" shape-rendering="crispEdges"><path d="M0 2h1v1h1v1h1v-1h1v-1h1v-1h1v-1h1v3h-1v1h-1v1h-1v1h-1v1h-1v-1h-1v-1h-1z" fill="#000"/></svg></div>
<span class="t b" style="transform:scaleX(0.9161);left:415px;top:332px;">Anhand Vertrags- und Objektart</span>
<span class="t b" style="transform:scaleX(0.9063);left:415px;top:345px;">Eingabefilter setzen (empfohlen)</span>
<div class="btn" style="left:396px;top:370px;width:97px;height:17px;"></div>
<span class="t b d" style="left:396px;top:372px;width:97px;text-align:center;font-size:12px;">Kaufdaten</span>
<div class="btn" style="left:516px;top:370px;width:97px;height:17px;"></div>
<span class="t b " style="left:516px;top:372px;width:97px;text-align:center;font-size:12px;">Mietdaten</span>
<div class="btn" style="left:636px;top:370px;width:97px;height:17px;"></div>
<span class="t b " style="left:636px;top:372px;width:97px;text-align:center;font-size:12px;">Maklerdaten</span>
<div class="btn" style="left:396px;top:394px;width:97px;height:17px;background:#8080FF;"></div>
<span class="t b " style="left:396px;top:396px;width:97px;text-align:center;font-size:12px;">Makrolage</span>
<div class="btn" style="left:516px;top:394px;width:97px;height:17px;background:#8080FF;"></div>
<span class="t b " style="left:516px;top:396px;width:97px;text-align:center;font-size:12px;">Mikrolage</span>
<div class="btn" style="left:396px;top:418px;width:97px;height:17px;background:#00FF00;"></div>
<span class="t b " style="left:396px;top:420px;width:97px;text-align:center;font-size:12px;">Grundstück</span>
<div class="btn" style="left:396px;top:442px;width:97px;height:17px;background:#FF8080;"></div>
<span class="t b d" style="left:396px;top:444px;width:97px;text-align:center;font-size:12px;text-shadow:none;color:#A8A495;">Einfamilienhaus</span>
<div class="btn" style="left:516px;top:442px;width:97px;height:17px;background:#FF8080;"></div>
<span class="t b " style="left:516px;top:444px;width:97px;text-align:center;font-size:12px;">Wohnung</span>
<div class="btn" style="left:636px;top:442px;width:97px;height:17px;background:#FF8080;"></div>
<span class="t b d" style="left:636px;top:444px;width:97px;text-align:center;font-size:12px;text-shadow:none;color:#A8A495;">Gewerbeeinheit</span>
<div class="btn" style="left:396px;top:466px;width:97px;height:17px;background:#FFFF00;"></div>
<span class="t b d" style="left:396px;top:468px;width:97px;text-align:center;font-size:12px;text-shadow:none;color:#A8A495;">Anlage/Siedl.</span>
<div class="btn" style="left:516px;top:466px;width:97px;height:17px;background:#FFFF00;"></div>
<span class="t b d" style="left:516px;top:468px;width:97px;text-align:center;font-size:12px;text-shadow:none;color:#A8A495;">Mehreinh.-Imm.</span>
<div class="btn" style="left:396px;top:490px;width:97px;height:17px;background:#C0FFFF;"></div>
<span class="t b " style="left:396px;top:492px;width:97px;text-align:center;font-size:12px;">Gebäude allg.</span>
<div class="btn" style="left:516px;top:490px;width:97px;height:17px;background:#C0FFFF;"></div>
<span class="t b " style="left:516px;top:492px;width:97px;text-align:center;font-size:12px;">Gebäudegeom.</span>
<div class="btn" style="left:636px;top:490px;width:97px;height:17px;background:#C0FFFF;"></div>
<span class="t b " style="left:636px;top:492px;width:97px;text-align:center;font-size:12px;">Rohbau</span>
<div class="btn" style="left:396px;top:514px;width:97px;height:17px;background:#C0FFFF;"></div>
<span class="t b " style="left:396px;top:516px;width:97px;text-align:center;font-size:12px;">Ausbau</span>
<div class="btn" style="left:516px;top:514px;width:97px;height:17px;background:#C0FFFF;"></div>
<span class="t b " style="left:516px;top:516px;width:97px;text-align:center;font-size:12px;">Haustechnik</span>
<div class="btn" style="left:636px;top:514px;width:97px;height:17px;background:#C0FFFF;"></div>
<span class="t b " style="left:636px;top:516px;width:97px;text-align:center;font-size:12px;">Umgeb./Stellpl.</span>
<div class="sp" style="left:4px;top:548px;width:48px;height:23px;"></div>
<div class="sp" style="left:54px;top:548px;width:48px;height:23px;"></div>
<div class="sp" style="left:104px;top:548px;width:50px;height:23px;"></div>
<div class="sp" style="left:156px;top:548px;width:99px;height:23px;"></div>
<div class="sp" style="left:257px;top:548px;width:486px;height:23px;border-right-color:#F4F3EC;"></div>
<span class="t " style="transform:scaleX(0.7823);left:8px;top:552px;color:#ACA899;">FEST</span>
<span class="t " style="transform:scaleX(0.7768);left:59px;top:552px;color:#ACA899;">NUM</span>
<span class="t " style="transform:scaleX(0.8296);left:109px;top:552px;">07:32</span>
<span class="t " style="transform:scaleX(0.8267);left:161px;top:552px;">06.11.2010</span>
<span class="t " style="transform:scaleX(0.8317);left:261px;top:552px;">XPO-DATEI: MIETWOHNUNG.xpo</span>
<svg style="left:742px;top:557px" width="14" height="14" viewBox="0 0 14 14"><path d="M13 2L2 13M13 6L6 13M13 10L10 13" stroke="#ACA899" stroke-width="1.4"/><path d="M13 3L3 13M13 7L7 13M13 11L11 13" stroke="#fff" stroke-width="1"/></svg>
</div></body></html>
